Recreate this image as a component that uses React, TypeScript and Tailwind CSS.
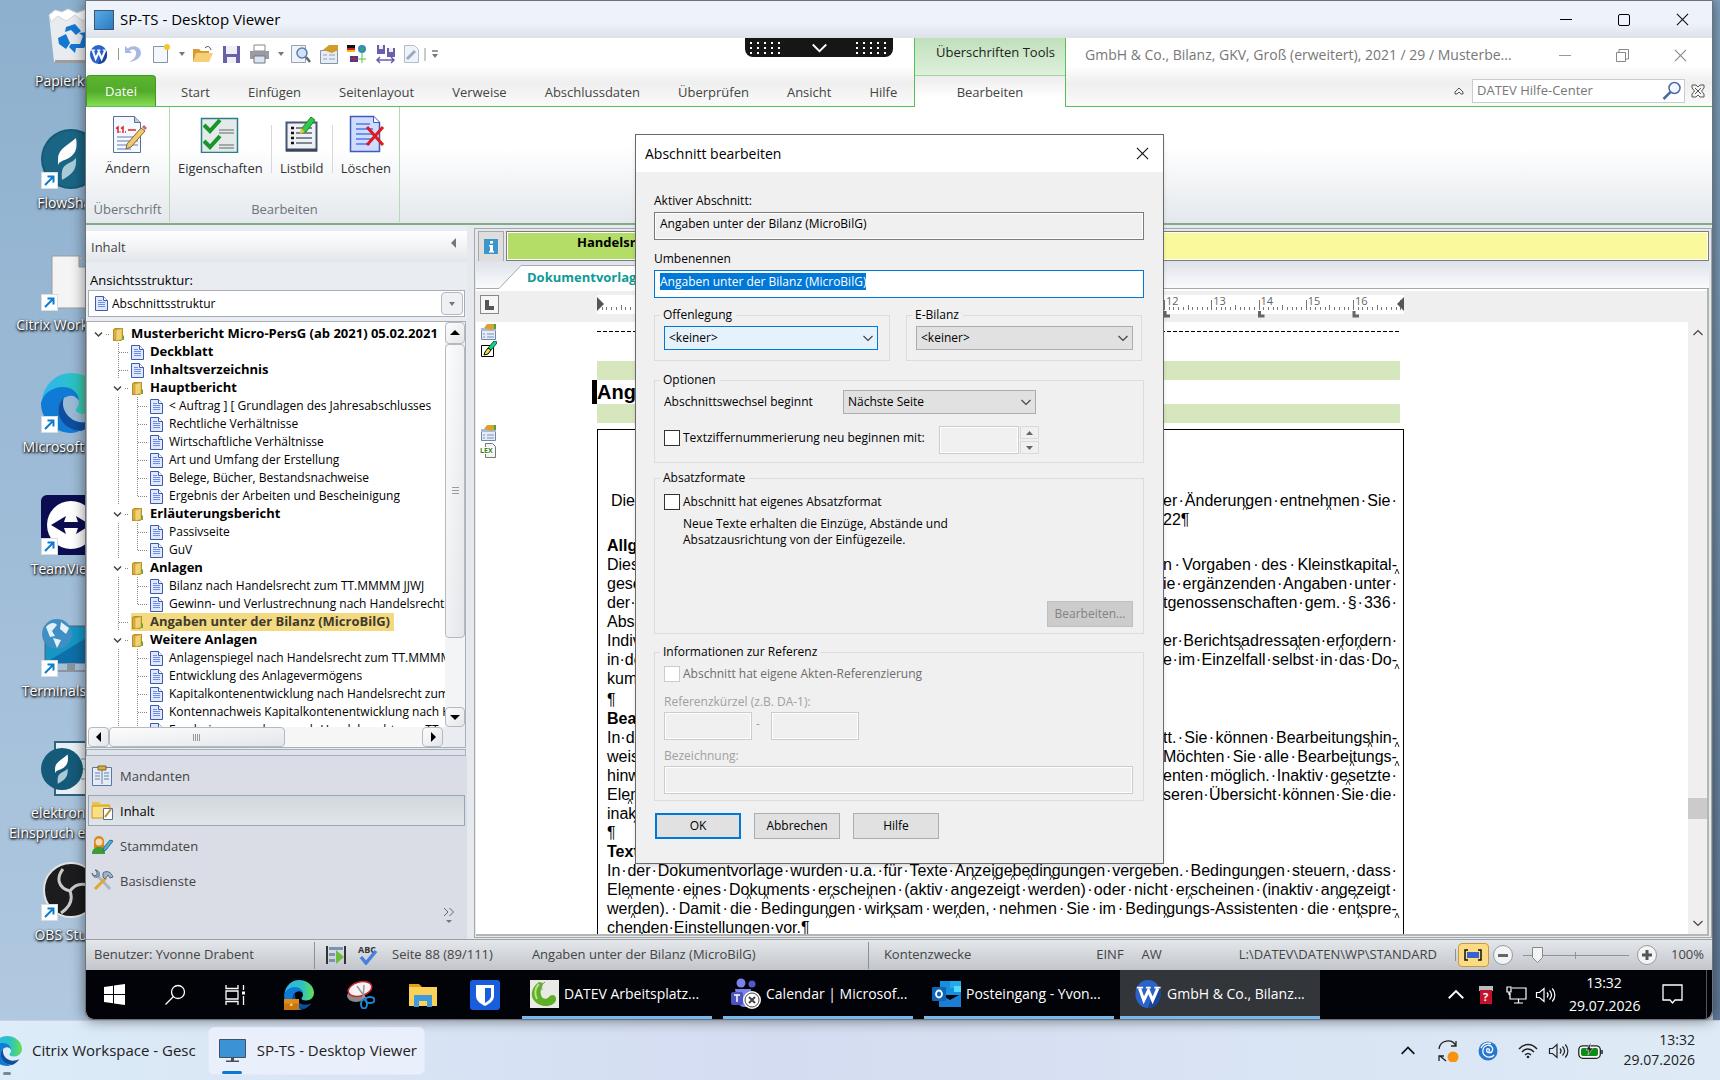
import { Fragment, useEffect, useRef, type ReactNode } from "react";
import clsx from "clsx";

type TreeItem = { level: number; kind: "doc" | "folder"; text: string; bold?: boolean; active?: boolean; leaf?: boolean; last?: boolean };

const TREE: TreeItem[] = [
  { level: 0, kind: "folder", text: "Musterbericht Micro-PersG (ab 2021) 05.02.2021", bold: true },
  { level: 1, kind: "doc", text: "Deckblatt", bold: true },
  { level: 1, kind: "doc", text: "Inhaltsverzeichnis", bold: true },
  { level: 1, kind: "folder", text: "Hauptbericht", bold: true },
  { level: 2, kind: "doc", text: "< Auftrag ] [ Grundlagen des Jahresabschlusses" },
  { level: 2, kind: "doc", text: "Rechtliche Verhältnisse" },
  { level: 2, kind: "doc", text: "Wirtschaftliche Verhältnisse" },
  { level: 2, kind: "doc", text: "Art und Umfang der Erstellung" },
  { level: 2, kind: "doc", text: "Belege, Bücher, Bestandsnachweise" },
  { level: 2, kind: "doc", text: "Ergebnis der Arbeiten und Bescheinigung", last: true },
  { level: 1, kind: "folder", text: "Erläuterungsbericht", bold: true },
  { level: 2, kind: "doc", text: "Passivseite" },
  { level: 2, kind: "doc", text: "GuV", last: true },
  { level: 1, kind: "folder", text: "Anlagen", bold: true },
  { level: 2, kind: "doc", text: "Bilanz nach Handelsrecht zum TT.MMMM JJWJ" },
  { level: 2, kind: "doc", text: "Gewinn- und Verlustrechnung nach Handelsrecht", last: true },
  { level: 1, kind: "folder", text: "Angaben unter der Bilanz (MicroBilG)", bold: true, active: true, leaf: true },
  { level: 1, kind: "folder", text: "Weitere Anlagen", bold: true },
  { level: 2, kind: "doc", text: "Anlagenspiegel nach Handelsrecht zum TT.MMMM" },
  { level: 2, kind: "doc", text: "Entwicklung des Anlagevermögens" },
  { level: 2, kind: "doc", text: "Kapitalkontenentwicklung nach Handelsrecht zum" },
  { level: 2, kind: "doc", text: "Kontennachweis Kapitalkontenentwicklung nach H" },
  { level: 2, kind: "doc", text: "Ergebnisverwendung nach Handelsrecht zum TT" },
];

// "|" marks an optional break, drawn as a small caret below the line
type DocLine = { left?: string; right?: string; full?: string; text?: string; bold?: boolean; gap?: string };

const LINES: DocLine[] = [
  { left: "Die", right: "er Änderun|gen entneh|men Sie ", gap: "pl-1" },
  { left: "", right: "22¶" },
  { text: "Allgemeines", bold: true, gap: "mt-[7px]" },
  { left: "Diese", right: "n Vorgaben des Kleinstkapital-|" },
  { left: "gesell", right: "ie ergänzenden Angaben unter " },
  { left: "der ", right: "tgenossenschaften gem. § 336 " },
  { text: "Absatz" },
  { left: "Individ", right: "er Berichts|adressa|ten er|for|dern " },
  { left: "in der", right: "e im Einzelfall selbst in das Do-|" },
  { text: "kument" },
  { text: "¶", gap: "mt-0.5" },
  { text: "Bearbeitung", bold: true },
  { left: "In der", right: "tt. Sie können Bearbeitungs|hin-|" },
  { left: "weise", right: "Möchten Sie alle Bearbei|tungs-|" },
  { left: "hinwei", right: "enten möglich. Inaktiv ge|setzte " },
  { left: "Ele|ment", right: "seren Übersicht können Sie die " },
  { text: "inak|tiv" },
  { text: "¶" },
  { text: "Texte", bold: true },
  { full: "In der Dokumentvorlage wurden u.a. für Texte An|zei|ge|be|din|gungen vergeben. Bedingun|gen steuern, dass " },
  { full: "Ele|mente ei|nes Do|ku|ments er|schei|nen (aktiv angezeigt werden) oder nicht er|scheinen (inaktiv an|ge|zeigt " },
  { full: "wer|den). Damit die Bedingun|gen wirk|sam wer|den, nehmen Sie im Bedin|gungs-Assistenten die ent|spre-|" },
  { text: "chen|den Einstellungen vor.¶" },
];

const SEGOE = "font-['Open_Sans','Noto_Sans',sans-serif]";

/* ---------- small icons ---------- */

function DocIcon() {
  return (
    <svg width="13" height="15" viewBox="0 0 13 15" className="shrink-0">
      <path d="M.5.5h8l4 4v10H.5z" fill="#dfe8ff" stroke="#3e5ba9" />
      <path d="M8.500.5v4h4" fill="#fff" stroke="#3e5ba9" />
      <path d="M3 4.500h4M3 6.500h7M3 8.500h7M3 10.500h7" stroke="#6f8fe8" />
    </svg>
  );
}

function FolderIcon() {
  return (
    <svg width="13" height="15" viewBox="0 0 13 15" className="shrink-0">
      <path d="M1 2.500L3 1h8v11.500l-2 1.500H1z" fill="#b98d28" />
      <path d="M2 2.500h5v10H2z" fill="#d8b041" />
      <path d="M4 3l6-1.500v11L4 14z" fill="#efd272" stroke="#c29b35" strokeWidth=".6" />
      <path d="M10.500 8.500H12v4.500h-1.500z" fill="#6ba52e" />
    </svg>
  );
}

function Chevron({ size = 10, color = "#444" }: { size?: number; color?: string }) {
  return (
    <svg width={size} height={size} viewBox="0 0 10 10" fill="none" stroke={color} strokeWidth="1.200">
      <path d="M.5 3L5 7.500 9.500 3" />
    </svg>
  );
}

function Cross({ size = 14, color = "#111" }: { size?: number; color?: string }) {
  return (
    <svg width={size} height={size} viewBox="0 0 14 14" stroke={color} strokeWidth="1.200">
      <path d="M1 1l12 12M13 1L1 13" />
    </svg>
  );
}

function Tri({ dir, color = "#000" }: { dir: "up" | "down" | "left" | "right"; color?: string }) {
  const d = { up: "M0 7L5 2l5 5z", down: "M0 3l5 5 5-5z", left: "M7 0L2 5l5 5z", right: "M3 0l5 5-5 5z" }[dir];
  return (
    <svg width="10" height="10" viewBox="0 0 10 10">
      <path d={d} fill={color} />
    </svg>
  );
}

function WLogo({ size }: { size: number }) {
  return (
    <svg width={size} height={size} viewBox="0 0 20 20">
      <ellipse cx="10" cy="10" rx="9" ry="10" fill="#2a62c9" />
      <path d="M10 20c5 0 9-4 9-10 0-2-.5-4-1.500-5.500L12 14z" fill="#1a4497" />
      <path d="M4 6l3 8.500L10.300 7.500l3 7L17 6" fill="none" stroke="#fff" strokeWidth="2.200" />
      <path d="M2 5.500h4.500M8.500 5.500H12M14.500 5.500H19" stroke="#fff" strokeWidth="1.300" />
    </svg>
  );
}

function EdgeIcon({ size, briefcase }: { size: number; briefcase?: boolean }) {
  const id = `edge${size}`;
  return (
    <svg width={size} height={size} viewBox="0 0 60 60" className="shrink-0">
      <defs>
        <linearGradient id={id} x1="0" x2="1">
          <stop offset="0" stopColor="#2fb4f2" />
          <stop offset=".6" stopColor="#2cc3c0" />
          <stop offset="1" stopColor="#66e04f" />
        </linearGradient>
      </defs>
      <path d="M1 27C3 12 15 0 30 0c17 0 30 12 30 26 0 9-7 15-16 15-6 0-9-2-9-4s3-3 3-8c0-7-7-12-15-12-9 0-18 4-22 10z" fill={`url(#${id})`} />
      <path d="M0 30c2-10 12-16 22-16 9 0 16 6 16 14-2-4-6-6-10-5-7 1-12 8-10 17 2 10 10 17 20 18-2 1-5 2-8 2C13 60 0 46 0 30z" fill="#0f7bd4" />
      <path d="M23 24c-5 5-7 11-5 18 3 10 12 16 22 16 6-2 12-7 15-12-5 3-11 4-17 3-9-2-15-9-16-17 0-3 0-6 1-8z" fill="#0d4f9e" />
      {briefcase && (
        <g>
          <rect x="0" y="38" width="30" height="22" fill="#c77412" />
          <rect x="0" y="38" width="30" height="9" fill="#e08b1d" />
          <rect x="12" y="47" width="5" height="5" fill="#ffd24a" />
        </g>
      )}
    </svg>
  );
}

function Speaker({ color, size = 22 }: { color: string; size?: number }) {
  return (
    <svg width={size} height={size} viewBox="0 0 22 22" fill="none" stroke={color} strokeWidth="1.200">
      <path d="M1.500 8.500h3l4.500-4v13l-4.500-4h-3z" />
      <path d="M12 8.500c1.300 1.500 1.300 3.500 0 5M14.500 6.500c2.500 2.700 2.500 6.300 0 9M17.300 4.500c3.400 3.800 3.400 9.200 0 13" />
    </svg>
  );
}

function ShortcutArrow() {
  return (
    <svg width="17" height="17" viewBox="0 0 17 17" className="absolute bottom-0 left-0">
      <rect x=".5" y=".5" width="16" height="16" fill="#fff" stroke="#d4dde6" />
      <path d="M4 13l8-8M6.500 4.500H12.500v6" fill="none" stroke="#0b7cd0" strokeWidth="2" />
    </svg>
  );
}

function FlowMark() {
  return (
    <>
      <path d="M17 30c0-10 9-13 18-21 2 11-1 17-9 21-5 2-8 3-9 6z" fill="#fff" />
      <path d="M21 51c-1-11 1-14 7-17 3-1 5-3 7-5 1 11-3 16-14 22z" fill="#a9cbd8" />
    </>
  );
}

/* ---------- desktop ---------- */

const DESKTOP: { label: string; shortcut?: boolean; art: ReactNode }[] = [
  {
    label: "Papierkorb",
    art: (
      <>
        <path d="M8 8l46-1-6 48H13z" fill="#e9ecef" />
        <path d="M8 8l6-5 7 2 6-3 9 4 10-4 8 2 6-1-5 12-6-6-7 5-8-6-9 6-8-5-7 6z" fill="#fff" stroke="#d2d6da" />
        <path d="M14 53h33l-1 3H14z" fill="#a09c9a" />
        <path d="M25 20l9-3 6 7-5 4-5-5-6 2zM17 31l8-4 4 9-4 6-7-5zM30 37h9l3-8-4-3 7-1 3 8-5 8h-8l-1 5-6-6z" fill="#1378d4" />
      </>
    ),
  },
  {
    label: "FlowShare",
    shortcut: true,
    art: (
      <>
        <circle cx="30" cy="30" r="30" fill="#155a78" />
        <circle cx="30" cy="30" r="28" fill="#1b6584" />
        <FlowMark />
      </>
    ),
  },
  {
    label: "Citrix Workspace",
    shortcut: true,
    art: <path d="M11 5h28l8 10v42H11zM38 5v11h9" fill="#f4f4f4" stroke="#9b9b9b" />,
  },
  { label: "Microsoft Edge", shortcut: true, art: null },
  {
    label: "TeamViewer",
    shortcut: true,
    art: (
      <>
        <rect width="60" height="60" rx="6" fill="#0b0d50" />
        <circle cx="30" cy="30" r="24" fill="#fff" />
        <path d="M10 30l15-9-2 6h14l-2-6 15 9-15 9 2-6H23l2 6z" fill="#0b0d50" />
      </>
    ),
  },
  {
    label: "Terminalserver",
    shortcut: true,
    art: (
      <>
        <path d="M4 9h56v37H4z" fill="#1596c4" stroke="#56636d" />
        <path d="M4 46L60 12v34z" fill="#0f6fa8" />
        <path d="M26 46h8v7h-8zM12 53h44v2H12z" fill="#8a949b" />
        <circle cx="16" cy="17" r="15" fill="#3f8fc4" />
        <path d="M5 10c4-5 9-5 11-2l-5 6 3 5-5 1zM20 5l8 6-3 6-6-5zM12 21l8 2-4 8z" fill="#e3f1f7" />
      </>
    ),
  },
  {
    label: "elektronisch Einspruch einlegen",
    art: (
      <>
        <path d="M14 3h46v53H14z" fill="#e8f0f3" stroke="#2e6480" strokeWidth="2" />
        <path d="M40 20h18M40 30h18M40 40h18" stroke="#a7c3d0" strokeWidth="2" />
        <circle cx="21" cy="30" r="21" fill="#155a78" />
        <g transform="scale(.7) translate(3 13)">
          <FlowMark />
        </g>
      </>
    ),
  },
  {
    label: "OBS Studio",
    shortcut: true,
    art: (
      <>
        <circle cx="30" cy="29" r="27" fill="#1c1b1d" stroke="#e3e3e3" strokeWidth="2" />
        <path d="M22 8c-7 9-5 19 7 22 3 8 0 16-9 22M29 30c6-8 14-8 22-4" fill="none" stroke="#c9c9c9" strokeWidth="3" />
      </>
    ),
  },
];

function DesktopIcons() {
  return (
    <aside className="w-[85px] shrink-0 overflow-hidden">
      <ul className="w-[142px]">
        {DESKTOP.map((d) => (
          <li key={d.label} className="flex h-[122px] flex-col items-center pt-[7px]">
            <span className="relative block size-[60px]">
              {d.art ? (
                <svg width="60" height="60" viewBox="0 0 60 60">
                  {d.art}
                </svg>
              ) : (
                <EdgeIcon size={60} />
              )}
              {d.shortcut && <ShortcutArrow />}
            </span>
            <span className="mt-1 max-w-[136px] text-center text-sm leading-5 text-white [text-shadow:0_1px_3px_#000,1px_1px_2px_#000]">
              {d.label}
            </span>
          </li>
        ))}
      </ul>
    </aside>
  );
}

/* ---------- ribbon ---------- */

function QuickAccess() {
  return (
    <div className="flex h-8 items-center pl-[3px]">
      <WLogo size={19} />
      <span className="mr-1 ml-2.5 h-3 w-px bg-[#999]" />
      <svg width="308" height="22" viewBox="0 0 308 22" fill="none">
        {/* undo */}
        <path d="M2 3v7h7L6.500 7.500C10 5 14 7 13 11c0 3-3 6-7 8 8-1 12-5 12-9 0-6-8-9-13-4.500z" fill="#a9b9e2" />
        {/* new page */}
        <path d="M30.500 3.500h14v16h-14z" fill="#f4f7fc" stroke="#8593a8" />
        <circle cx="44" cy="4" r="3" fill="#f6c72b" />
        <path d="M56 9h6l-3 4z" fill="#777" />
        {/* open */}
        <path d="M70 6h6l2 2h8v10H70z" fill="#d99a35" />
        <path d="M73 10h17l-4 9H70z" fill="#f6cf74" />
        <path d="M82 5c3-3 5-1 6 2" stroke="#555" />
        {/* save */}
        <path d="M100 3h17v17h-17z" fill="#6a5fa8" />
        <path d="M103 3h11v8h-11zM104 14h9v6h-9z" fill="#eef0f8" />
        {/* print */}
        <path d="M131 2h11v6h-11z" fill="#fff" stroke="#888" />
        <path d="M127 8h19v8h-19z" fill="#9a9ca2" />
        <path d="M131 13h11v7h-11z" fill="#d9e6f7" stroke="#777" />
        <path d="M155 9h6l-3 4z" fill="#777" />
        {/* preview */}
        <path d="M168.500 2.500h14v17h-14z" fill="#f0f3f8" stroke="#98a3b4" />
        <circle cx="179" cy="10" r="5" fill="#cfe4fa" stroke="#5a7fae" strokeWidth="1.500" />
        <path d="M183 14l4 5" stroke="#666" strokeWidth="2.500" />
        {/* properties */}
        <path d="M197.500 7.500h17v13h-17z" fill="#e7ecf4" stroke="#8593a8" />
        <path d="M200 7l6-5h9v5l-6 3z" fill="#d39b2c" />
        <path d="M200 12h4M200 16h4M206 12h6M206 16h6" stroke="#8ea0bf" />
        {/* language */}
        <path d="M224 2h8v3h-8z" fill="#111" />
        <path d="M224 5h8v2h-8z" fill="#d6202a" />
        <path d="M224 7h8v2h-8z" fill="#f0c020" />
        <path d="M227 13h8v6h-8z" fill="#3b3f8f" />
        <path d="M227 16h8M231 13v6" stroke="#d6202a" />
        <circle cx="239" cy="6" r="4" fill="#3487c9" />
        <path d="M237 4l4 1-2 4z" fill="#48a845" />
        <path d="M239 10v10M235 16h8" stroke="#53c04a" />
        {/* save as */}
        <path d="M254 2h8v9h-8zM264 5h8v9h-8z" fill="#6a5fa8" />
        <path d="M256 2h4v4h-4zM266 5h4v4h-4z" fill="#eef0f8" />
        <path d="M254 17h17M257 14l-3 3 3 3M268 14l3 3-3 3" stroke="#6a5fa8" strokeWidth="1.500" />
        {/* link */}
        <path d="M281.500 2.500h10l4 4v13h-14z" fill="#eff2f6" stroke="#b4bdca" />
        <path d="M284 16l4-4M288 12l4-4" stroke="#9aa9c4" strokeWidth="3" />
        <path d="M302 5v13" stroke="#999" />
      </svg>
      <svg width="8" height="12" viewBox="0 0 8 12">
        <path d="M1 3h6" stroke="#777" strokeWidth="1.500" />
        <path d="M1 6h6L4 10z" fill="#777" />
      </svg>
    </div>
  );
}

const TABS = ["Start", "Einfügen", "Seitenlayout", "Verweise", "Abschlussdaten", "Überprüfen", "Ansicht", "Hilfe"];

function RibbonHead() {
  return (
    <header className="relative flex h-[69px] shrink-0 bg-gradient-to-b from-white from-40% via-[#efefef] via-65% to-[#fbfbfb] text-[13px] text-[#444]">
      <div className="flex w-[828px] shrink-0 flex-col border-b border-[#57bf57]">
        <QuickAccess />
        <nav className="mt-auto flex h-[31px] items-stretch">
          <button className="w-[70px] rounded-t-sm border border-b-0 border-[#3f9b1f] bg-gradient-to-b from-[#5cb531] via-[#51ab29] to-[#86dd52] pt-0.5 text-white">
            Datei
          </button>
          <div className="flex items-center gap-[38px] pt-1 pl-[25px]">
            {TABS.map((t) => (
              <button key={t}>{t}</button>
            ))}
          </div>
        </nav>
      </div>
      <div className="flex w-[152px] shrink-0 flex-col border-x border-[#57bf57] bg-white">
        <div className="h-[38px] border-b border-[#9bd79b] bg-gradient-to-b from-[#bfe0bb] to-[#dff0dc] pt-1 pl-[21px] leading-5 whitespace-nowrap text-[#222]">
          Überschriften Tools
        </div>
        <button className="flex-1 bg-gradient-to-b from-[#ececec] to-white to-70% pt-0.5">Bearbeiten</button>
      </div>
      <div className="flex min-w-0 flex-1 flex-col border-b border-[#57bf57]">
        <div className="flex h-[34px] items-center pl-[19px] text-sm text-[#777]">
          <span className="truncate">GmbH &amp; Co., Bilanz, GKV, Groß (erweitert), 2021 / 29 / Musterbe...</span>
          <div className="ml-auto flex items-center gap-[45px] pr-[25px]">
            <button aria-label="Minimieren" className="h-px w-3 bg-[#999]" />
            <button aria-label="Verkleinern">
              <svg width="13" height="13" viewBox="0 0 13 13" fill="none" stroke="#888">
                <path d="M.5 3.500h9v9h-9zM3 3V.5h9.500V10H10" />
              </svg>
            </button>
            <button aria-label="Schließen">
              <Cross size={13} color="#888" />
            </button>
          </div>
        </div>
        <div className="mt-[7px] flex h-6 items-center justify-end gap-[6px] pr-[7px]">
          <button aria-label="Menüband einklappen" className="mr-0.5">
            <svg width="10" height="8" viewBox="0 0 10 8" fill="none" stroke="#555">
              <path d="M1 5l4-4 4 4v2H7L5 5 3 7H1z" />
            </svg>
          </button>
          <label className="flex h-6 w-[213px] items-center border border-[#c9cdd2] bg-white pr-0.5 pl-1">
            <input aria-label="Hilfe-Center durchsuchen" placeholder="DATEV Hilfe-Center" className="min-w-0 flex-1 placeholder:text-[#777]" />
            <svg width="20" height="20" viewBox="0 0 20 20" fill="none" stroke="#4a6aa5">
              <circle cx="12.500" cy="7" r="5.500" fill="#f3f8ff" strokeWidth="1.500" />
              <path d="M8.500 11L1.500 18" strokeWidth="2.500" />
            </svg>
          </label>
          <svg width="14" height="14" viewBox="0 0 14 14" fill="none" stroke="#555">
            <path d="M1 1h4l2 2 2-2h4v3l-2.500 3L13 10v3H9l-2-2-2 2H1v-3l2.500-3L1 4z" />
            <path d="M4 4l6 6M10 4l-6 6" />
          </svg>
        </div>
      </div>
      {/* connection bar of the remote session */}
      <button aria-label="Verbindungsleiste" className="absolute top-0 left-[659px] flex h-[19px] w-[148px] items-center justify-between rounded-b-lg bg-[#161616] px-1">
        <Dots />
        <Chevron size={15} color="#fff" />
        <Dots />
      </button>
    </header>
  );
}

function Dots() {
  return (
    <svg width="34" height="13" viewBox="0 0 34 13" fill="#fff">
      {[0, 1, 2].map((r) => [0, 1, 2, 3, 4].map((c) => <rect key={`${r}${c}`} x={c * 7 + 1} y={r * 5 + 1} width="2" height="2" />))}
    </svg>
  );
}

function RibbonButton({ label, children }: { label: string; children: ReactNode }) {
  return (
    <button className="flex flex-col items-center gap-[5px]">
      <svg width="40" height="40" viewBox="0 0 40 40" fill="none">
        {children}
      </svg>
      <span className="leading-5">{label}</span>
    </button>
  );
}

function RibbonBody() {
  return (
    <section className="flex h-[118px] shrink-0 border-b-2 border-[#7fae86] bg-gradient-to-b from-white from-35% to-[#e4e8ec] pb-px text-[13px] text-[#333]">
      <div className="flex w-[84px] flex-col items-center border-r border-[#b7d9b7] pt-1.5">
        <RibbonButton label="Ändern">
          <path d="M6.500 3.500h21l6 6v30h-27z" fill="#f5f8fd" stroke="#5a6f95" />
          <path d="M27.500 3.500v6h6" fill="#bccbe2" stroke="#5a6f95" />
          <path d="M9 15.500l2-1.500v6M14 15.500l2-1.500v6M12.500 19h1M18 19h1M21 17h8" stroke="#e0202a" strokeWidth="1.500" />
          <path d="M10 24h21M10 28h21M10 32h21M10 36h14" stroke="#8ea6cf" strokeWidth="1.500" />
          <path d="M34 15l4 3-14 16-5 2 1-5z" fill="#f0c96b" stroke="#7d6540" />
          <path d="M35 14l2-2 3 3-2 2z" fill="#c66" />
        </RibbonButton>
        <span className="mt-auto mb-[3px] text-[#6d737b]">Überschrift</span>
      </div>
      <div className="flex w-[230px] flex-col items-center border-r border-[#b7d9b7] pt-1.5">
        <div className="flex w-full justify-between px-2">
          <RibbonButton label="Eigenschaften">
            <path d="M1.500 5.500h36v34h-36z" fill="#e4eaea" stroke="#2a7f86" strokeWidth="1.500" />
            <path d="M4 12l6 6L20 7M4 28l6 6 10-11" stroke="#18962a" strokeWidth="4" />
            <path d="M19 17h15M19 20h15M19 32h15M19 35h15" stroke="#8d9494" strokeWidth="1.500" />
          </RibbonButton>
          <span className="mt-3 h-12 w-px bg-[#d5d8dc]" />
          <RibbonButton label="Listbild">
            <path d="M4.500 9.500h30v28h-30z" fill="#eef1f6" stroke="#46566e" strokeWidth="2" />
            <path d="M4 37h31" stroke="#3b4759" strokeWidth="3" />
            <path d="M9 15h3M9 20h3M9 25h3M9 30h3" stroke="#111" strokeWidth="2.500" />
            <path d="M14 15h16M14 20h16M14 25h16M14 30h16" stroke="#5d6570" strokeWidth="1.500" />
            <path d="M29 4l4 3-9 12-5 1 1-5z" fill="#31c94a" stroke="#178a2c" />
            <path d="M19 15l4 4-5 2z" fill="#f4c531" />
          </RibbonButton>
          <span className="mt-3 h-12 w-px bg-[#d5d8dc]" />
          <RibbonButton label="Löschen">
            <path d="M4.500 3.500h23l6 6v29h-29z" fill="#cfdcff" stroke="#3e5bb5" strokeWidth="1.500" />
            <path d="M27.500 3.500v6h6" fill="#fff" stroke="#3e5bb5" />
            <path d="M10 11h14M10 16h17M10 21h17M10 26h17M10 31h14" stroke="#4d78e6" strokeWidth="1.500" />
            <path d="M21 14l16 18M37 14L21 32" stroke="#e01919" strokeWidth="3" />
          </RibbonButton>
        </div>
        <span className="mt-auto mb-[3px] text-[#6d737b]">Bearbeiten</span>
      </div>
    </section>
  );
}

/* ---------- left panel ---------- */

function Branch({ item }: { item: TreeItem }) {
  const dash = { stroke: "#888", strokeDasharray: "1 1" };
  if (item.kind === "folder" && !item.leaf) {
    return (
      <svg width="19" height="18" viewBox="0 0 19 18" fill="none" className="shrink-0">
        <path d="M2 7.500L5.500 11 9 7.500" stroke="#444" strokeWidth="1.500" />
        <path d="M13 9.500h4" {...dash} />
      </svg>
    );
  }
  return (
    <svg width="19" height="18" viewBox="0 0 19 18" fill="none" className="shrink-0">
      <path d={item.last ? "M6.500 0v9" : "M6.500 0v18"} {...dash} />
      <path d="M7 9.500h10" {...dash} />
    </svg>
  );
}

function Trunk() {
  return (
    <svg width="19" height="18" viewBox="0 0 19 18" className="shrink-0">
      <path d="M6.500 0v18" stroke="#888" strokeDasharray="1 1" />
    </svg>
  );
}

const scrollBtn = "flex shrink-0 items-center justify-center rounded-sm border border-[#b5b9c0] bg-gradient-to-br from-[#fcfcfc] to-[#e4e6ea]";

function TreePanel() {
  return (
    <div className="mr-px flex min-h-0 flex-1 flex-col border border-[#a9adb5] bg-white pl-px">
      <div className="flex min-h-0 flex-1">
        <ul role="tree" aria-label="Abschnitte" className="min-w-0 flex-1 overflow-hidden pt-[3px] pl-[5px] text-xs text-black">
          {TREE.map((item) => (
            <li key={item.text} role="treeitem" className="flex h-[18px] items-center whitespace-nowrap">
              {item.level > 0 && <span className="w-[19px] shrink-0" />}
              {item.level > 1 && <Trunk />}
              <Branch item={item} />
              <span className={clsx("flex h-full items-center gap-1.5", item.active && "bg-[#f3d97f] pr-1 text-[#3d3a30]")}>
                {item.kind === "doc" ? <DocIcon /> : <FolderIcon />}
                <span className={clsx(item.bold && "text-[13px] font-bold")}>{item.text}</span>
              </span>
            </li>
          ))}
        </ul>
        <div className="flex w-5 flex-col bg-[#f3f4f6]">
          <button aria-label="Nach oben" className={clsx(scrollBtn, "h-[22px]")}>
            <Tri dir="up" />
          </button>
          <div className={clsx(scrollBtn, "h-[294px]")}>
            <svg width="7" height="8" stroke="#999">
              <path d="M0 .5h7M0 3.500h7M0 6.500h7" />
            </svg>
          </div>
          <button aria-label="Nach unten" className={clsx(scrollBtn, "mt-auto h-5")}>
            <Tri dir="down" />
          </button>
        </div>
      </div>
      <div className="flex h-5 shrink-0 bg-[#e9ecf1] pr-[22px]">
        <div className="flex flex-1 bg-[#f6f6f7]">
          <button aria-label="Nach links" className={clsx(scrollBtn, "w-[21px]")}>
            <Tri dir="left" />
          </button>
          <div className={clsx(scrollBtn, "w-[176px]")}>
            <svg width="8" height="7" stroke="#999">
              <path d="M.5 0v7M2.500 0v7M4.500 0v7M6.500 0v7" />
            </svg>
          </div>
          <button aria-label="Nach rechts" className={clsx(scrollBtn, "ml-auto w-[21px]")}>
            <Tri dir="right" />
          </button>
        </div>
      </div>
    </div>
  );
}

const NAV: { label: string; art: ReactNode }[] = [
  {
    label: "Mandanten",
    art: (
      <>
        <path d="M1.500 3.500h19v18h-19z" fill="#e4ecf8" stroke="#5d77a8" />
        <path d="M11 5v15M4 9h5M4 12h5M4 15h5M13 9h5M13 12h5M13 15h5" stroke="#6b7f9f" />
        <path d="M7 2h8v4H7z" fill="#d9ae42" stroke="#7f6420" />
      </>
    ),
  },
  {
    label: "Inhalt",
    art: (
      <>
        <path d="M1 3h7l2 2h9v14H1z" fill="#f0c244" />
        <path d="M1 7h18v12H1z" fill="#fbdf83" stroke="#c79a2a" />
        <path d="M12.500 9.500h9v11h-9z" fill="#fff" stroke="#5a6f95" />
        <path d="M20 10l-6 8" stroke="#c58b2f" strokeWidth="2" />
      </>
    ),
  },
  {
    label: "Stammdaten",
    art: (
      <>
        <path d="M3 14V7a5 5 0 0 1 10 0v7z" fill="#d8891c" />
        <circle cx="8" cy="8" r="3.500" fill="#f7d9b5" />
        <path d="M1 20c0-5 3-7 7-7s6 2 6 7z" fill="#3d9a35" />
        <path d="M22 7l-7 9-3 1 1-4 6-7z" fill="#4fb3cf" stroke="#2b6f8a" />
      </>
    ),
  },
  {
    label: "Basisdienste",
    art: (
      <>
        <path d="M6 6l13 14" stroke="#aab6c4" strokeWidth="3" />
        <path d="M15 9L4 20" stroke="#e0a82d" strokeWidth="3" />
        <path d="M12 4c4-3 8-1 10 4l-3 1-2-3-3 4-2-2z" fill="#9fb4cf" stroke="#55677f" />
        <path d="M1 4l2 3 3-1V3L4 1c3 0 5 2 4 6-2 2-6 2-7-3z" fill="#9fb4cf" stroke="#55677f" />
      </>
    ),
  },
];

function LeftPanel() {
  return (
    <aside className="flex w-[381px] shrink-0 flex-col bg-[#e9ecf1] pt-1.5">
      <div className="flex h-[31px] shrink-0 items-center justify-between bg-gradient-to-b from-white to-[#e3e7eb] pt-0.5 pr-2 pl-[5px] text-[13px] text-[#444]">
        Inhalt
        <span className="pb-2.5">
          <Tri dir="left" color="#777" />
        </span>
      </div>
      <label htmlFor="ansicht" className="mt-2.5 pl-1 text-[13px] leading-4 text-black">
        Ansichtsstruktur:
      </label>
      <div className="relative mx-0.5 mt-0.5 mb-1 flex h-[27px] shrink-0 items-center border border-[#a9adb5] bg-white pl-1.5">
        <DocIcon />
        <select id="ansicht" className="h-full flex-1 appearance-none pl-1 text-xs text-black">
          <option>Abschnittsstruktur</option>
        </select>
        <span className="pointer-events-none absolute top-px right-px bottom-px flex w-[22px] items-center justify-center rounded-sm border border-[#b5bac2] bg-[#eef0f3]">
          <svg width="6" height="4">
            <path d="M0 0h6L3 4z" fill="#777" />
          </svg>
        </span>
      </div>
      <TreePanel />
      <div className="mt-px mr-px h-[7px] shrink-0 border border-[#a3adbb] bg-[#dfe4ea]" />
      <nav className="flex shrink-0 flex-col bg-[#dadde5] pt-0.5 text-[13px] text-[#444]">
        {NAV.map((n) => (
          <button
            key={n.label}
            className={clsx(
              "mx-0.5 my-0.5 flex h-[31px] items-center gap-1.5 border pl-0.5",
              n.label === "Inhalt" ? "border-[#9aa5b3] bg-gradient-to-b from-[#d3d8de] to-[#e0e5e9] text-black" : "border-transparent",
            )}
          >
            <svg width="23" height="23" viewBox="0 0 23 23" fill="none">
              {n.art}
            </svg>
            <span className="pt-0.5">{n.label}</span>
          </button>
        ))}
        <button aria-label="Weitere Schaltflächen" className="mt-2 mr-3 mb-[15px] ml-auto">
          <svg width="12" height="18" viewBox="0 0 12 18" fill="none" stroke="#666">
            <path d="M1 2l4 4-4 4M6.500 2l4 4-4 4" />
            <path d="M3 14h6L6 17z" fill="#777" stroke="none" />
          </svg>
        </button>
      </nav>
    </aside>
  );
}

/* ---------- document ---------- */

function Caret() {
  return (
    <span className="relative">
      <svg width="6" height="6" viewBox="0 0 6 6" className="absolute top-3 -left-[3px]" fill="none" stroke="#333">
        <path d="M1 6l2-5 2 5" />
      </svg>
    </span>
  );
}

function Word({ text }: { text: string }) {
  return (
    <span>
      {text.split("|").map((part, i) => (
        <Fragment key={i}>
          {i > 0 && <Caret />}
          {part}
        </Fragment>
      ))}
    </span>
  );
}

function Words({ text, justify }: { text: string; justify?: boolean }) {
  const words = text.split(" ");
  return (
    <span className={clsx("flex whitespace-nowrap", justify && "justify-between")}>
      {words.map((w, i) => (
        <Fragment key={i}>
          {i > 0 && <span>·</span>}
          {w && <Word text={w} />}
        </Fragment>
      ))}
    </span>
  );
}

function Line({ line }: { line: DocLine }) {
  return (
    <div className={clsx("h-[19px] leading-[19px]", line.gap, line.bold && "font-bold")}>
      {line.full && <Words text={line.full} justify />}
      {line.text && <Words text={line.text} />}
      {line.right && (
        <div className="flex justify-between">
          <Words text={line.left ?? ""} />
          <div className="w-[234px]">
            <Words text={line.right} justify={line.right.includes(" ")} />
          </div>
        </div>
      )}
    </div>
  );
}

function Ruler() {
  const cm = 47.25;
  const ticks = Array.from({ length: 171 }, (_, i) => i);
  return (
    <svg width="807" height="24" viewBox="0 0 807 24" className="shrink-0">
      <rect width="807" height="19" fill="#fff" />
      {ticks.map((i) => {
        const x = Math.round((i * cm) / 10) + 0.5;
        const top = i % 10 === 0 ? 5 : i % 5 === 0 ? 10 : 12;
        return <path key={i} d={`M${x} ${top}v${15 - top}`} stroke="#777" />;
      })}
      {ticks
        .filter((i) => i > 0 && i % 10 === 0 && i < 170)
        .map((i) => (
          <text key={i} x={(i * cm) / 10 + 2} y="10" fontSize="11" fill="#666">
            {i / 10}
          </text>
        ))}
      {[12, 14, 16].map((i) => (
        <path key={i} d={`M${i * cm + 1} 16v5h5`} fill="none" stroke="#666" strokeWidth="3" />
      ))}
      <path d="M0 2l7 7-7 7z" fill="#555" />
      <path d="M807 2l-7 7 7 7z" fill="#555" />
    </svg>
  );
}

function GutterIcon({ kind }: { kind: "card" | "pen" | "lex" }) {
  return (
    <svg width="17" height="17" viewBox="0 0 17 17" fill="none">
      {kind === "card" && (
        <>
          <path d="M1.500 5.500h14v11h-14z" fill="#e5ecf7" stroke="#6f86ae" />
          <path d="M1 5h15v3H1z" fill="#a8bbdb" />
          <path d="M4 5l3-4h8v5l-5 1z" fill="#d9a133" />
          <path d="M14 1h2v5h-2z" fill="#4aa336" />
          <path d="M3 11h2M3 14h2M7 11h7M7 14h7" stroke="#7d91b8" />
        </>
      )}
      {kind === "pen" && (
        <>
          <path d="M1.500 4.500h12v11h-12z" fill="#fff" stroke="#000" />
          <path d="M16 0l1 2-6 7-3-2 6-7z" fill="#19cf8c" stroke="#0b5b3e" />
          <path d="M8 7l3 2-3 4-4 1 1-3z" fill="#e8e337" stroke="#000" />
        </>
      )}
      {kind === "lex" && (
        <>
          <path d="M5.500 1.500h7l3 3v11h-10z" fill="#f2f4f2" stroke="#777" />
          <path d="M0 5h14v7H0z" fill="#fff" />
          <text x="0" y="11" fontSize="7" fontWeight="bold" fill="#3c7d1e">
            LEX
          </text>
        </>
      )}
    </svg>
  );
}

function Editor() {
  return (
    <main className="mt-[3px] mb-px ml-[7px] flex min-w-0 flex-1 flex-col border border-[#a4a8ad] bg-[#e6e9ee] p-px pr-0.5">
      <div className="flex h-[31px] shrink-0 gap-0.5 bg-[#e4e6ea] pt-px pl-0.5">
        <button aria-label="Information" className="flex w-[26px] items-center justify-center border border-b-0 border-[#a8a8a8] bg-[#dedede]">
          <svg width="14" height="15" viewBox="0 0 14 15">
            <rect width="14" height="15" fill="#3a96cb" />
            <path d="M6 2h3v2.500H6zM5 6h4v6h1v1.500H5V12h1V7.500H5z" fill="#fff" />
          </svg>
        </button>
        <div className="flex h-[30px] flex-1 border border-[#7d7d7d] bg-white p-px text-[13px] font-bold text-black">
          <div className="w-2/5 bg-[#b4dd67] pl-[69px] leading-[18px]">Handelsrecht</div>
          <div className="flex-1 bg-[#fafa9d]" />
        </div>
      </div>
      <div className="flex h-7 shrink-0 items-end bg-gradient-to-b from-[#dee3ea] to-[#fbfcfd]">
        <svg width="46" height="24" viewBox="0 0 46 24" fill="none" className="shrink-0">
          <path d="M23 24L45 1h1v23z" fill="#fff" />
          <path d="M0 23.500h23L45 .5h1" stroke="#a7a9ac" />
        </svg>
        <button className="h-6 w-48 border-t border-r border-[#a7a9ac] bg-white pl-[5px] text-left text-[13px] font-bold text-[#0f9a96]">
          Dokumentvorlage
        </button>
        <div className="h-px flex-1 bg-[#a7a9ac]" />
      </div>
      <div className="flex min-h-0 flex-1 flex-col border-r-2 border-b-2 border-[#b3b6b1] bg-white pt-0.5">
        <div className="flex h-[31px] shrink-0 items-start bg-[#efefef] pt-1 pl-1">
          <button aria-label="Tabulator" className="mr-[98px] flex size-[19px] items-center justify-center border border-[#888] bg-[#f6f6f6]">
            <svg width="9" height="10">
              <path d="M2 0v8h7" fill="none" stroke="#555" strokeWidth="4" />
            </svg>
          </button>
          <Ruler />
        </div>
        <div className="flex min-h-0 flex-1">
          <div className="flex w-[115px] shrink-0 flex-col gap-px pt-px pl-1">
            <GutterIcon kind="card" />
            <GutterIcon kind="pen" />
            <span className="h-16" />
            <GutterIcon kind="card" />
            <GutterIcon kind="lex" />
          </div>
          <div className="w-[813px] shrink-0 overflow-hidden pt-[9px] pl-1.5 font-['Liberation_Sans',Arial,sans-serif] text-base text-black">
            <div className="mr-1 h-px bg-[repeating-linear-gradient(90deg,#000_0_4px,transparent_4px_6px)]" />
            <div className="mt-[29px] mr-1 h-[19px] bg-[#d7e7bd]" />
            <h1 className="relative h-6 text-xl leading-6 font-bold">
              <span className="absolute -left-[5px] h-6 w-[5px] bg-black" />
              Angaben
            </h1>
            <div className="mr-1 h-[19px] bg-[#d7e7bd]" />
            <div className="mt-1.5 h-[900px] border border-black pt-[61px] pr-[6px] pl-[9px]">
              {LINES.map((l, i) => (
                <Line key={i} line={l} />
              ))}
            </div>
          </div>
          <div className="ml-auto flex w-[19px] flex-col items-center bg-[#efefef] pt-1.5 pb-1.5">
            <button aria-label="Nach oben blättern" className="rotate-180">
              <Chevron />
            </button>
            <div className="mt-[460px] h-[21px] w-full bg-[#cbcbcb]" />
            <button aria-label="Nach unten blättern" className="mt-auto">
              <Chevron />
            </button>
          </div>
        </div>
      </div>
    </main>
  );
}

/* ---------- status bar and task bars ---------- */

function StatusBar() {
  return (
    <footer className="flex h-[31px] shrink-0 items-center border-t border-[#9a9ea6] bg-gradient-to-b from-[#e4e7ea] to-[#c2c6cc] text-[13px] whitespace-nowrap text-[#444]">
      <span className="w-[228px] pl-2">Benutzer: Yvonne Drabent</span>
      <span className="h-[27px] w-px bg-[#8c9097]" />
      <svg width="20" height="20" viewBox="0 0 20 20" className="ml-[11px]">
        <path d="M1 1v18M19 1v18" stroke="#333" strokeWidth="2" />
        <path d="M3 2h14v3H3zM3 8h6v3H3zM3 14h6v3H3z" fill="#7b93b5" />
        <path d="M10 5l8 7-8 7z" fill="#6cbd3e" />
      </svg>
      <svg width="21" height="20" viewBox="0 0 21 20" className="ml-3">
        <text x="0" y="8" fontSize="9" fontWeight="bold" fill="#333">
          ABC
        </text>
        <path d="M3 12l5 6L18 6" stroke="#4a7fe0" strokeWidth="3.500" fill="none" />
      </svg>
      <span className="ml-[13px]">Seite 88 (89/111)</span>
      <span className="ml-[39px] w-[336px]">Angaben unter der Bilanz (MicroBilG)</span>
      <span className="h-[27px] w-px bg-[#8c9097]" />
      <span className="ml-[15px]">Kontenzwecke</span>
      <div className="ml-auto flex items-center pr-2">
        <span>EINF</span>
        <span className="ml-[18px]">AW</span>
        <span className="ml-[77px]">L:\DATEV\DATEN\WP\STANDARD</span>
        <span className="ml-[18px] h-3 w-px bg-[#8c9097]" />
        <button aria-label="Seitenbreite" className="ml-0.5 flex h-6 w-[31px] items-center justify-center rounded-sm border border-[#c89a3c] bg-[#fbdc84]">
          <svg width="18" height="12" viewBox="0 0 18 12" fill="none">
            <path d="M4 1H1v10h3M14 1h3v10h-3" stroke="#111" strokeWidth="1.500" />
            <path d="M3 3h12v6H3z" fill="#3563cf" />
          </svg>
        </button>
        <button aria-label="Verkleinern" className="ml-1 flex size-5 items-center justify-center rounded-full border border-[#999] bg-[#f3f4f5]">
          <span className="h-[3px] w-2.5 bg-[#666]" />
        </button>
        <label className="relative ml-2.5 flex h-5 w-[106px] items-center">
          <input type="range" min="0" max="100" defaultValue="13" aria-label="Zoom" className="absolute inset-0 opacity-0" />
          <svg width="106" height="18" viewBox="0 0 106 18" fill="none" className="pointer-events-none">
            <path d="M0 9.500h106M52.500 6v7" stroke="#8f949a" />
            <path d="M9.500 1.500h10v10l-5 5-5-5z" fill="#f3f4f5" stroke="#888" />
          </svg>
        </label>
        <button aria-label="Vergrößern" className="ml-2 flex size-5 items-center justify-center rounded-full border border-[#999] bg-[#f3f4f5]">
          <svg width="10" height="10">
            <path d="M5 0v10M0 5h10" stroke="#555" strokeWidth="3" />
          </svg>
        </button>
        <span className="ml-3.5">100%</span>
      </div>
    </footer>
  );
}

const TASKS: { label: string; active?: boolean; art: ReactNode }[] = [
  {
    label: "DATEV Arbeitsplatz...",
    art: (
      <svg width="29" height="28" viewBox="0 0 29 28">
        <rect width="29" height="28" fill="#e9eae6" />
        <path d="M9 2C3 6 0 13 3 19c4 7 14 9 20 5 3-2 4-5 2-8-2-2-5-1-6 1-3 3-7 2-8-2-1-3 0-8 2-12z" fill="#5fae27" />
        <path d="M9 4c-4 4-5 10-2 15" stroke="#b9e28d" strokeWidth="2" fill="none" />
        <path d="M12 10c-1-4 0-6 3-8" stroke="#7c8a6c" fill="none" />
      </svg>
    ),
  },
  {
    label: "Calendar | Microsof...",
    art: (
      <svg width="30" height="32" viewBox="0 0 30 32">
        <circle cx="10" cy="5" r="4.500" fill="#7b83eb" />
        <circle cx="21" cy="6" r="3.500" fill="#5059c9" />
        <path d="M4 11h16v12c0 8-12 8-14 0z" fill="#7b83eb" />
        <rect y="14" width="12" height="13" rx="2" fill="#4b53bc" />
        <path d="M3 17h6M6 17v7" stroke="#fff" strokeWidth="1.500" />
        <circle cx="21" cy="22" r="9" fill="#fff" />
        <circle cx="21" cy="22" r="7" fill="none" stroke="#444" />
        <path d="M18 19l6 6M24 19l-6 6" stroke="#444" strokeWidth="2" />
      </svg>
    ),
  },
  {
    label: "Posteingang - Yvon...",
    art: (
      <svg width="29" height="28" viewBox="0 0 29 28">
        <path d="M8 1h21v14H8z" fill="#1490df" />
        <path d="M18 1h11v7H18z" fill="#28a8ea" />
        <path d="M22 6h7v6h-7z" fill="#50d9ff" />
        <path d="M7 14l11 6 11-6v13H7z" fill="#1a7fd4" />
        <rect y="7" width="14" height="14" rx="1" fill="#0f64b8" />
        <ellipse cx="7" cy="14" rx="3" ry="3.500" fill="none" stroke="#fff" strokeWidth="1.800" />
      </svg>
    ),
  },
  { label: "GmbH & Co., Bilanz...", active: true, art: <WLogo size={28} /> },
];

function InnerTaskbar() {
  return (
    <footer className="flex h-[49px] shrink-0 items-center rounded-b-lg bg-[#020308] pl-[18px] text-sm text-white">
      <button aria-label="Start">
        <svg width="21" height="21" viewBox="0 0 21 21" fill="#fff">
          <path d="M0 3l9-1.300V10H0zM10 1.500L21 0v10H10zM0 11h9v8.300L0 18zM10 11h11v10l-11-1.500z" />
        </svg>
      </button>
      <button aria-label="Suche" className="ml-10">
        <svg width="21" height="21" viewBox="0 0 21 21" fill="none" stroke="#fff" strokeWidth="1.300">
          <circle cx="13" cy="8" r="6.500" />
          <path d="M8.500 12.500L.5 20.500" />
        </svg>
      </button>
      <button aria-label="Taskansicht" className="ml-[39px]">
        <svg width="21" height="20" viewBox="0 0 21 20" fill="none" stroke="#fff" strokeWidth="1.300">
          <path d="M1 0v3.500h12V0M1 20v-3.500h12V20M1 6h12v8H1zM18.500 0v5M18.500 11v9" />
          <path d="M17 6.500h3v3h-3z" fill="#fff" stroke="none" />
        </svg>
      </button>
      <span className="ml-[38px]">
        <EdgeIcon size={30} briefcase />
      </span>
      <svg width="28" height="28" viewBox="0 0 28 28" className="ml-[33px]">
        <ellipse cx="9" cy="15" rx="9" ry="6" fill="#8a8a8a" />
        <ellipse cx="13" cy="8" rx="12" ry="7" fill="#f4f4f4" stroke="#d1252d" strokeWidth="1.500" transform="rotate(-15 13 8)" />
        <path d="M10 5l9 13M17 4l-1 14" stroke="#999" strokeWidth="1.500" />
        <ellipse cx="23" cy="19" rx="4.500" ry="3" fill="none" stroke="#2286d2" strokeWidth="2" />
        <ellipse cx="17" cy="23" rx="3" ry="4.500" fill="none" stroke="#2286d2" strokeWidth="2" />
      </svg>
      <svg width="28" height="24" viewBox="0 0 28 24" className="ml-[34px]">
        <path d="M0 1h10l3 3H0z" fill="#e0a11a" />
        <path d="M0 4h28v19H0z" fill="#fbd158" />
        <path d="M5 12h18v12h-5v-6h-8v6H5z" fill="#3f9ae0" />
      </svg>
      <svg width="30" height="30" viewBox="0 0 30 30" className="ml-[33px]">
        <rect width="30" height="30" rx="3" fill="#175ddc" />
        <path d="M6 5h18v11c0 5-5 8-9 10-4-2-9-5-9-10z" fill="#fff" />
        <path d="M15 8h6v8c0 3-3 5-6 7z" fill="#175ddc" />
      </svg>
      <div className="ml-[22px] flex gap-[11px] self-stretch">
        {TASKS.map((t) => (
          <button
            key={t.label}
            className={clsx(
              "flex items-center gap-[5px] border-b-[3px] border-[#76b9ed] pt-0.5 text-left whitespace-nowrap",
              t.active ? "-ml-[5px] w-[200px] bg-[#32363b] pl-3.5" : "w-[190px] pl-2",
            )}
          >
            <span className="shrink-0">{t.art}</span>
            {t.label}
          </button>
        ))}
      </div>
      <div className="ml-auto flex items-center self-stretch">
        <span className="rotate-180">
          <Chevron size={16} color="#fff" />
        </span>
        <svg width="16" height="20" viewBox="0 0 16 20" className="ml-3.5">
          <path d="M1 1h14v5H1z" fill="#b9bcc0" />
          <path d="M2 5h12v14H2z" fill="#c4122c" />
          <text x="5" y="16" fontSize="11" fontWeight="bold" fill="#fff">
            ?
          </text>
        </svg>
        <svg width="21" height="19" viewBox="0 0 21 19" fill="none" stroke="#fff" strokeWidth="1.200" className="ml-3">
          <path d="M6 3h14v11H4V8M1 2h4v5H1zM3 7v3M8 18h9M12.500 14v4" />
        </svg>
        <span className="ml-2">
          <Speaker color="#fff" />
        </span>
        <div className="ml-3 w-[70px] pb-0.5 text-center leading-[23px]">
          <div>13:32</div>
          <div>29.07.2026</div>
        </div>
        <svg width="21" height="21" viewBox="0 0 21 21" fill="none" stroke="#fff" strokeWidth="1.300" className="ml-[23px]">
          <path d="M1 1h19v15h-7l-2.500 3L8 16H1z" />
        </svg>
        <span className="mr-[5px] ml-[23px] h-full w-px bg-[#555]" />
      </div>
    </footer>
  );
}

function OuterTaskbar() {
  return (
    <footer className="flex h-[60px] shrink-0 items-center border-t border-[#c9d3e2] bg-gradient-to-r from-[#dcecf8] via-[#d4dcf1] via-45% to-[#deebf6] text-[15px] text-[#222]">
      <button className="relative -ml-2 flex items-center gap-2.5">
        <EdgeIcon size={30} />
        Citrix Workspace - Gesc
        <span className="absolute top-9 left-[11px] h-[3px] w-2 rounded-full bg-[#7d8791]" />
      </button>
      <button className="relative ml-3 flex h-12 w-[217px] items-center gap-[11px] rounded-md border border-[#e3e9f8] bg-[#eaf0fb] pl-2.5">
        <svg width="27" height="23" viewBox="0 0 27 23">
          <path d="M.5.5h26v18H.5z" fill="#3b93d6" stroke="#45525e" />
          <path d="M12 19h3v2.500h-3zM7 21.500h13v1.500H7z" fill="#45525e" />
        </svg>
        SP-TS - Desktop Viewer
        <span className="absolute bottom-0 left-[13px] h-[3px] w-5 rounded-full bg-[#0a78d4]" />
      </button>
      <div className="ml-auto flex items-center pr-[25px]">
        <span className="rotate-180">
          <Chevron size={14} color="#111" />
        </span>
        <svg width="22" height="22" viewBox="0 0 22 22" fill="none" stroke="#222" strokeWidth="1.300" className="ml-[22px]">
          <path d="M2 9a9 9 0 0 1 17-3M19 1v5h-5M9 21l-6-5M2 21v-5h5" />
          <circle cx="16" cy="17" r="5.500" fill="#f7930c" stroke="none" />
        </svg>
        <svg width="20" height="20" viewBox="0 0 20 20" fill="none" className="ml-[19px]">
          <circle cx="10" cy="10" r="9.500" fill="#2878cf" />
          <path d="M10.500 10.500a1.500 1.500 0 1 0-2-1.500c0 3 5 4 6 .5C15.500 6 12 3.500 9 4.500c-5 1.500-5.500 8-1.500 10.500 3 2 7 1 8.500-1M3 7c2-4 6-5.500 10-4.500" stroke="#fff" strokeWidth="1.300" />
        </svg>
        <svg width="20" height="16" viewBox="0 0 20 16" fill="none" stroke="#222" strokeWidth="1.500" className="ml-5">
          <path d="M1 6c5-6 13-6 18 0M4 9c3.500-4 8.500-4 12 0M7 12c2-2 4-2 6 0" />
          <circle cx="10" cy="14" r="1.300" fill="#222" stroke="none" />
        </svg>
        <span className="ml-2.5">
          <Speaker color="#222" />
        </span>
        <svg width="25" height="18" viewBox="0 0 25 18" className="ml-2">
          <rect x=".8" y="3.800" width="21.500" height="12.500" rx="4" fill="#fff" stroke="#222" strokeWidth="1.300" />
          <rect x="3" y="6" width="17" height="8" rx="2" fill="#0e8a16" />
          <path d="M24 8v4" stroke="#222" strokeWidth="1.500" />
          <path d="M13 0l-5 8h3l-1 5 5-7h-3z" fill="#222" stroke="#fff" strokeWidth=".5" />
        </svg>
        <div className="ml-[21px] pb-0.5 text-right text-sm leading-5">
          <div>13:32</div>
          <div>29.07.2026</div>
        </div>
      </div>
    </footer>
  );
}

/* ---------- dialog ---------- */

const boxOff = "h-7 border border-[#ccc] bg-[#f0f0f0] shadow-[inset_0_0_0_1px_#fff]";
const dlgButton = "h-[26px] w-[86px] border border-[#adadad] bg-[#e1e1e1]";

function Combo({ label, value, className, wrap }: { label: string; value: string; className?: string; wrap: string }) {
  return (
    <span className={clsx("relative block", wrap)}>
      <select aria-label={label} className={clsx("h-6 w-full appearance-none border pl-1", className ?? "border-[#adadad] bg-[#e1e1e1]")}>
        <option>{value}</option>
      </select>
      <span className="pointer-events-none absolute top-[7px] right-[5px]">
        <Chevron />
      </span>
    </span>
  );
}

function Group({ title, className, children }: { title: string; className?: string; children: ReactNode }) {
  return (
    <fieldset className={clsx("min-w-0 border border-[#dcdcdc] pr-2.5 pl-[9px]", className)}>
      <legend className="-ml-1 pr-1 pl-[3px] leading-4">{title}</legend>
      {children}
    </fieldset>
  );
}

const check = "size-4 shrink-0 appearance-none border bg-white";

function Spin({ up }: { up?: boolean }) {
  return (
    <svg width="7" height="4">
      <path d={up ? "M0 4h7L3.500 0z" : "M0 0h7L3.500 4z"} fill="#666" />
    </svg>
  );
}

function SectionDialog() {
  const nameRef = useRef<HTMLInputElement>(null);

  useEffect(() => {
    nameRef.current?.focus();
    nameRef.current?.select();
  }, []);

  return (
    <div role="dialog" aria-label="Abschnitt bearbeiten" className="absolute top-[133px] left-[549px] w-[529px] border border-[#6a6a6a] bg-[#f0f0f0] text-xs text-black shadow-md">
      <div className="flex h-[37px] items-center justify-between bg-white pr-3.5 pl-[9px] text-sm">
        Abschnitt bearbeiten
        <button aria-label="Dialog schließen">
          <Cross size={13} />
        </button>
      </div>
      <form className="pt-[21px] pr-[19px] pb-6 pl-[18px]" onSubmit={(e) => e.preventDefault()}>
        <label htmlFor="aktiv" className="block leading-4">
          Aktiver Abschnitt:
        </label>
        <input
          id="aktiv"
          readOnly
          value="Angaben unter der Bilanz (MicroBilG)"
          className="mt-[3px] block h-7 w-full border border-[#7a7a7a] bg-[#f0f0f0] px-[5px] pb-1.5 shadow-[inset_0_0_0_1px_#fff] outline-none"
        />
        <label htmlFor="name" className="mt-[11px] block leading-4">
          Umbenennen
        </label>
        <input
          id="name"
          ref={nameRef}
          defaultValue="Angaben unter der Bilanz (MicroBilG)"
          className="mt-[3px] block h-7 w-full border border-[#0078d7] bg-white px-[5px] pb-1.5 outline-none selection:bg-[#0078d7] selection:text-white"
        />
        <div className="mt-[9px] flex gap-4">
          <Group title="Offenlegung" className="w-[236px] pb-2.5">
            <Combo label="Offenlegung" value="<keiner>" wrap="mt-[3px] w-[214px]" className="border-[#0078d7] bg-[#e5f1fb]" />
          </Group>
          <Group title="E-Bilanz" className="w-[236px] pb-2.5">
            <Combo label="E-Bilanz" value="<keiner>" wrap="mt-[3px] w-[217px]" />
          </Group>
        </div>
        <Group title="Optionen" className="mt-[11px] pb-2">
          <div className="mt-0.5 flex items-center">
            <span className="w-[179px]">Abschnittswechsel beginnt</span>
            <Combo label="Abschnittswechsel beginnt" value="Nächste Seite" wrap="w-[193px]" />
          </div>
          <div className="mt-3 flex items-start">
            <input id="neu" type="checkbox" className={clsx(check, "mt-1 border-[#333]")} />
            <label htmlFor="neu" className="mt-1 w-[259px] pl-[3px]">
              Textziffernummerierung neu beginnen mit:
            </label>
            <input aria-label="Startziffer" disabled className={clsx(boxOff, "w-20")} />
            <div className="ml-px flex w-[19px] flex-col gap-0.5">
              <button type="button" aria-label="Erhöhen" className="flex h-[13px] items-center justify-center border border-[#dadada]">
                <Spin up />
              </button>
              <button type="button" aria-label="Verringern" className="flex h-[13px] items-center justify-center border border-[#dadada]">
                <Spin />
              </button>
            </div>
          </div>
        </Group>
        <Group title="Absatzformate" className="mt-[7px] pb-1.5">
          <div className="mt-2 flex items-center">
            <input id="absatz" type="checkbox" className={clsx(check, "border-[#333]")} />
            <label htmlFor="absatz" className="pl-[3px]">
              Abschnitt hat eigenes Absatzformat
            </label>
          </div>
          <p className="mt-1.5 w-72 pl-[19px] leading-4">Neue Texte erhalten die Einzüge, Abstände und Absatzausrichtung von der Einfügezeile.</p>
          <button type="button" disabled className="mt-[53px] ml-auto block h-[26px] w-[86px] border border-[#bfbfbf] bg-[#ccc] text-[#838383]">
            Bearbeiten...
          </button>
        </Group>
        <Group title="Informationen zur Referenz" className="mt-2.5 pb-1.5">
          <div className="mt-1.5 flex items-center text-[#6d6d6d]">
            <input id="akten" type="checkbox" disabled className={clsx(check, "border-[#ccc]")} />
            <label htmlFor="akten" className="pl-[3px]">
              Abschnitt hat eigene Akten-Referenzierung
            </label>
          </div>
          <label htmlFor="ref1" className="mt-3 block leading-4 text-[#a0a0a0]">
            Referenzkürzel (z.B. DA-1):
          </label>
          <div className="mt-0.5 flex items-center text-[#a0a0a0]">
            <input id="ref1" disabled className={clsx(boxOff, "w-[88px]")} />
            <span className="w-[19px] pb-1 pl-1">-</span>
            <input aria-label="Referenzkürzel Nummer" disabled className={clsx(boxOff, "w-[88px]")} />
          </div>
          <label htmlFor="bez" className="mt-2 block leading-4 text-[#a0a0a0]">
            Bezeichnung:
          </label>
          <input id="bez" disabled className={clsx(boxOff, "mt-0.5 block w-full")} />
        </Group>
        <div className="mt-3 flex gap-[13px] pl-px">
          <button type="button" className="h-[26px] w-[86px] border-2 border-[#0078d7] bg-[#e1e1e1]">
            OK
          </button>
          <button type="button" className={dlgButton}>
            Abbrechen
          </button>
          <button type="button" className={dlgButton}>
            Hilfe
          </button>
        </div>
      </form>
    </div>
  );
}

export default function App() {
  return (
    <div className={clsx("flex h-screen flex-col overflow-hidden bg-[#9fbdd6]", SEGOE)}>
      <div className="flex min-h-0 flex-1 bg-gradient-to-b from-[#8db0ce] to-[#b0c8e0]">
        <DesktopIcons />
        <div className="relative flex min-w-0 flex-1 flex-col rounded-b-lg border border-[#6f7277] bg-[#e6e9ee] shadow-[0_0_14px_rgba(0,0,0,0.5)]">
          <div className="flex h-[37px] shrink-0 items-center bg-gradient-to-b from-[#eef3fb] from-60% to-[#dde1e8] pl-2 text-[15px] text-black">
            <span className="mr-1.5 size-5 border border-[#3c566d] bg-gradient-to-br from-[#58aae6] to-[#2b7cc0]" />
            SP-TS - Desktop Viewer
            <div className="ml-auto flex items-center gap-[46px] pr-[23px]">
              <button aria-label="Minimieren" className="h-px w-3 bg-black" />
              <button aria-label="Maximieren" className="size-3 rounded-[2px] border border-black" />
              <button aria-label="Schließen">
                <Cross size={13} />
              </button>
            </div>
          </div>
          <RibbonHead />
          <RibbonBody />
          <div className="flex min-h-0 flex-1">
            <LeftPanel />
            <Editor />
          </div>
          <StatusBar />
          <InnerTaskbar />
          <SectionDialog />
        </div>
        <div className="w-[7px] shrink-0 bg-gradient-to-b from-[#7fa3c0] to-[#5f7a9a]" />
      </div>
      <OuterTaskbar />
    </div>
  );
}
